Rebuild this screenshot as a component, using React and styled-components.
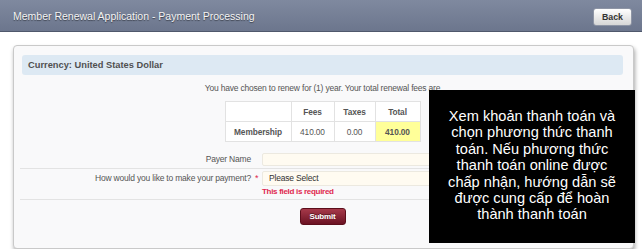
import React from 'react'
import styled, { createGlobalStyle } from 'styled-components'

const GlobalStyle = createGlobalStyle`
  body {
    margin: 0;
    background: #ffffff;
    font-family: "Liberation Sans", Arial, sans-serif;
  }
`

const Page = styled.div`
  position: relative;
  width: 642px;
  height: 249px;
  overflow: hidden;
`

const Header = styled.div`
  height: 31px;
  display: flex;
  align-items: center;
  justify-content: space-between;
  padding: 0 10px 0 13px;
  background: linear-gradient(#7f899f, #6c768d);
  border-bottom: 1px solid #4f586c;
`

const Title = styled.div`
  color: #f4f4f4;
  font-size: 10.5px;
  text-shadow: 0 1px 1px rgba(0, 0, 0, 0.5);
`

const BackButton = styled.button`
  width: 39px;
  height: 18px;
  padding: 0;
  margin-top: 2px;
  font-family: inherit;
  font-size: 8.8px;
  font-weight: bold;
  color: #333;
  background: linear-gradient(#ffffff, #d6d6d6);
  border: 1px solid #8e95a5;
  border-radius: 3px;
`

const Main = styled.div`
  padding: 13px 8px 0 13px;
`

const Card = styled.div`
  height: 193px;
  padding: 9px 10px 0 8px;
  background: #f9f9fa;
  border: 1px solid #c9c9c9;
  border-radius: 4px;
  box-shadow: 1px 3px 4px rgba(0, 0, 0, 0.35);
`

const CurrencyBar = styled.div`
  height: 20px;
  display: flex;
  align-items: center;
  padding-left: 6px;
  background: #dde9f3;
  border-radius: 3px;
  font-size: 9.3px;
  font-weight: bold;
  color: #505050;
`

const Intro = styled.div`
  margin-top: 7px;
  text-align: center;
  font-size: 8.5px;
  letter-spacing: -0.2px;
  line-height: 13px;
  color: #555;
`

const FeeTable = styled.table`
  margin: 6px auto 8px;
  border-collapse: collapse;
  table-layout: fixed;
  background: #fff;
  font-size: 8.3px;
  letter-spacing: -0.1px;
  color: #555;

  td, th {
    border: 1px solid #e2e2e2;
    height: 19px;
    padding: 0;
    text-align: center;
  }
  th {
    font-weight: bold;
  }
`

const Cell = styled.td`
  width: ${p => p.$w}px;
  font-weight: ${p => (p.$bold ? 'bold' : 'normal')};
  background: ${p => (p.$highlight ? '#ffff99' : '#fff')};
`

const FormRow = styled.div`
  display: grid;
  grid-template-columns: 231px 11px 1fr;
  align-items: start;
  padding: ${p => p.$pad};
  border-bottom: 1px solid #e3e3e3;
  margin-left: -2px;
`

const Label = styled.div`
  text-align: right;
  font-size: 8.5px;
  letter-spacing: -0.2px;
  color: #555;
  line-height: ${p => p.$lh}px;
`

const Required = styled.span`
  color: #e0284f;
  font-size: 9px;
  padding-left: 4px;
  line-height: 15px;
`

const FieldBox = styled.div`
  height: ${p => p.$h}px;
  box-sizing: border-box;
  background: #fffbf1;
  border: 1px solid #ece9e0;
  border-radius: 2px;
  font-size: 8.5px;
  letter-spacing: -0.2px;
  line-height: ${p => p.$h - 2}px;
  color: #333;
  padding-left: 6px;
`

const ErrorText = styled.div`
  font-size: 8px;
  letter-spacing: -0.3px;
  font-weight: bold;
  color: #e0284f;
  line-height: 11px;
`

const Actions = styled.div`
  display: flex;
  justify-content: center;
  padding-top: 8px;
`

const SubmitButton = styled.button`
  width: 46px;
  height: 17px;
  padding: 0;
  font-family: inherit;
  font-size: 8px;
  letter-spacing: -0.2px;
  font-weight: bold;
  color: #fff;
  background: linear-gradient(#a6394a, #6b1222);
  border: 1px solid #5c0e1b;
  border-radius: 3px;
  text-shadow: 0 -1px 0 rgba(0, 0, 0, 0.4);
`

const Callout = styled.div`
  position: absolute;
  left: 429px;
  top: 90px;
  width: 206px;
  height: 153px;
  box-sizing: border-box;
  padding-top: 18px;
  background: #000;
  color: #fff;
  font-size: 14.6px;
  line-height: 16.4px;
  text-align: center;
`

const fees = [
  { name: 'Membership', fees: '410.00', taxes: '0.00', total: '410.00' },
]

const App = () => {
  return (
    <Page>
      <GlobalStyle />
      <Header>
        <Title>Member Renewal Application - Payment Processing</Title>
        <BackButton>Back</BackButton>
      </Header>
      <Main>
        <Card>
          <CurrencyBar>Currency: United States Dollar</CurrencyBar>
          <Intro>You have chosen to renew for (1) year. Your total renewal fees are</Intro>
          <FeeTable>
            <thead>
              <tr>
                <Cell $w={65} as="th"></Cell>
                <Cell $w={42} as="th">Fees</Cell>
                <Cell $w={40} as="th">Taxes</Cell>
                <Cell $w={44} as="th">Total</Cell>
              </tr>
            </thead>
            <tbody>
              {fees.map(f => (
                <tr key={f.name}>
                  <Cell $bold>{f.name}</Cell>
                  <Cell>{f.fees}</Cell>
                  <Cell>{f.taxes}</Cell>
                  <Cell $bold $highlight>{f.total}</Cell>
                </tr>
              ))}
            </tbody>
          </FeeTable>
          <FormRow $pad="3px 0 2px">
            <Label $lh={13}>Payer Name</Label>
            <span />
            <FieldBox $h={13} />
          </FormRow>
          <FormRow $pad="2px 0 2px">
            <Label $lh={15}>How would you like to make your payment?</Label>
            <Required>*</Required>
            <div>
              <FieldBox $h={15}>Please Select</FieldBox>
              <ErrorText>This field is required</ErrorText>
            </div>
          </FormRow>
          <Actions>
            <SubmitButton>Submit</SubmitButton>
          </Actions>
        </Card>
      </Main>
      <Callout>
        Xem khoản thanh toán và<br />
        chọn phương thức thanh<br />
        toán. Nếu phương thức<br />
        thanh toán online được<br />
        chấp nhận, hướng dẫn sẽ<br />
        được cung cấp để hoàn<br />
        thành thanh toán
      </Callout>
    </Page>
  )
}

export default App
